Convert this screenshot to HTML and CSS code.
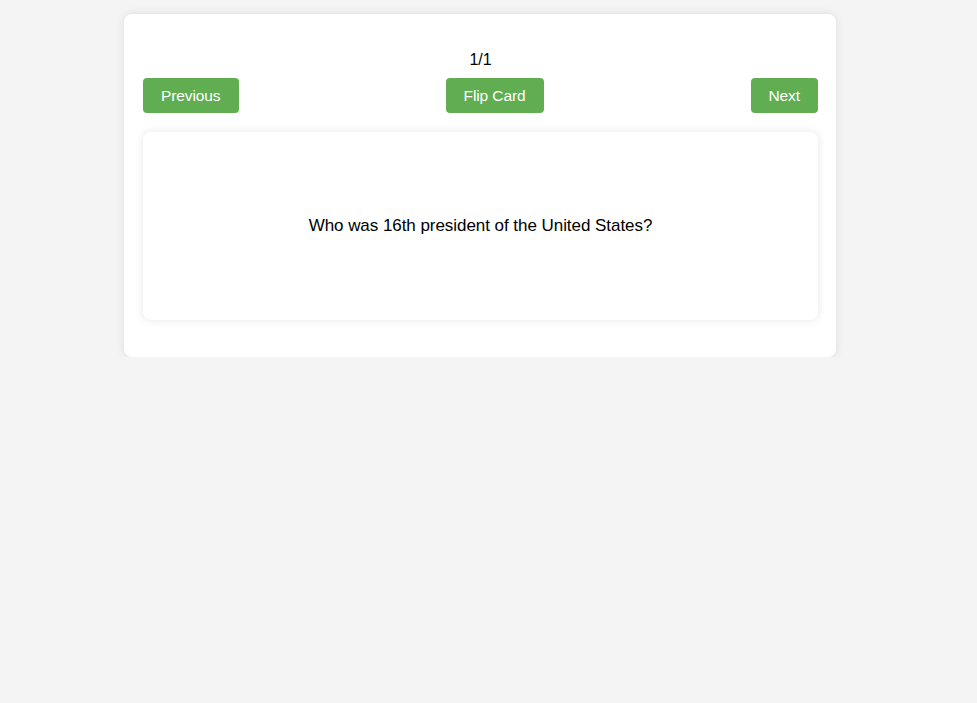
FILE: index.html
```html
<!DOCTYPE html>
<html>
<head>
<meta charset="utf-8">
<link rel="stylesheet" href="styles.css">
</head>
<body>
<div class="app">
  <div class="counter">1/1</div>
  <div class="controls">
    <button class="btn btn-prev">Previous</button>
    <button class="btn btn-flip">Flip Card</button>
    <button class="btn btn-next">Next</button>
  </div>
  <div class="card">
    <p class="question">Who was 16th president of the United States?</p>
  </div>
</div>
</body>
</html>
```
FILE: styles.css
```css
html, body {
  margin: 0;
  background: #f4f4f4;
  font-family: "Liberation Sans", Arial, sans-serif;
}
body {
  padding: 14px 0 0 124px;
}
.app {
  width: 712px;
  box-sizing: border-box;
  background: #fff;
  border-radius: 8px;
  box-shadow: 0 0 10px rgba(0,0,0,0.1);
  padding: 35px 18px 37px 19px;
}
.counter {
  text-align: center;
  font-size: 16px;
  line-height: 18px;
  color: #000;
  margin: 2px 0 9px;
}
.controls {
  display: flex;
  justify-content: space-between;
  margin-bottom: 19px;
}
.btn {
  height: 35px;
  padding: 0 18px;
  border: none;
  border-radius: 4px;
  background: #60ad52;
  color: #fff;
  font-family: "Liberation Sans", Arial, sans-serif;
  font-size: 15.5px;
  letter-spacing: -0.1px;
  cursor: pointer;
}
.card {
  height: 188px;
  background: #fff;
  border-radius: 8px;
  box-shadow: 0 0 10px rgba(0,0,0,0.1);
  display: flex;
  align-items: center;
  justify-content: center;
}
.question {
  margin: 0;
  font-size: 17px;
  letter-spacing: -0.05px;
  color: #000;
}
```
